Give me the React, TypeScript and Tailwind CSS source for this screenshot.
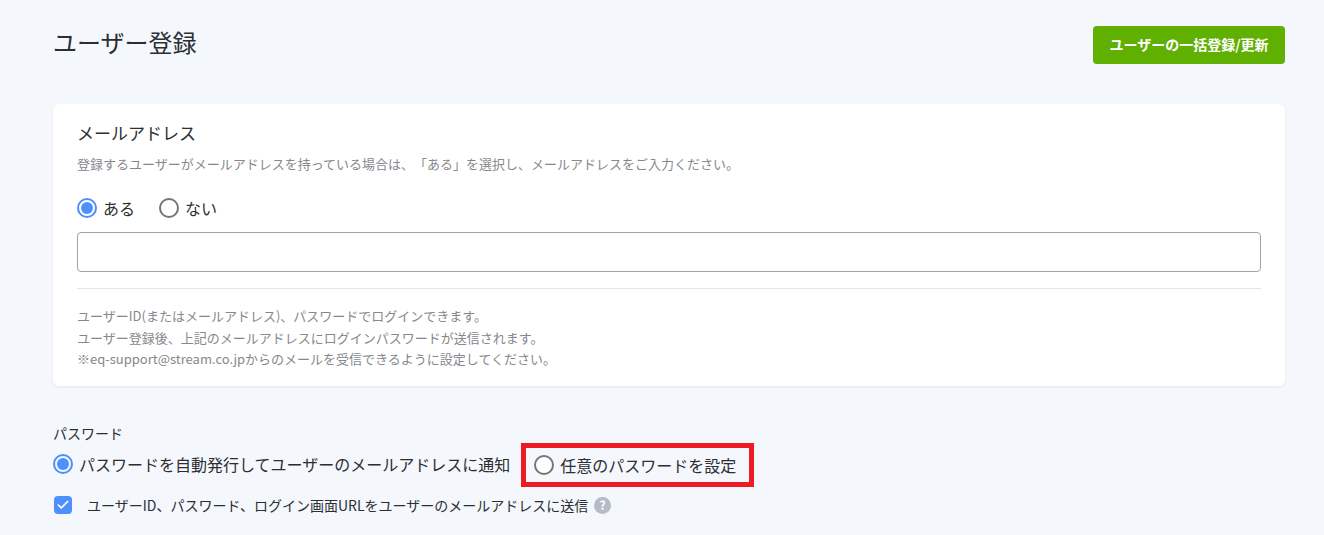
import { Check } from "lucide-react";

const Radio = ({ checked, label }: { checked?: boolean; label: string }) => (
    <label className="flex items-center gap-[6px]">
        {checked ? (
            <span className="flex h-5 w-5 items-center justify-center rounded-full border-2 border-[#4d8ffb]">
                <span className="h-3 w-3 rounded-full bg-[#4d8ffb]" />
            </span>
        ) : (
            <span className="h-5 w-5 rounded-full border-2 border-[#757575] bg-white" />
        )}
        <span>{label}</span>
    </label>
);

export default function App() {
    return (
        <div className="h-[535px] overflow-hidden bg-[#f4f7fc] pl-[53px] pr-[39px] pt-[26px] text-[#2b2f33] [text-spacing-trim:space-all] font-['Noto_Sans_CJK_JP','Noto_Sans',sans-serif]">
            <div className="flex items-start justify-between">
                <h1 className="text-2xl leading-[32px]">ユーザー登録</h1>
                <button className="h-[38px] w-[192px] rounded bg-[#5fb000] pb-[2px] text-sm font-bold text-white">
                    ユーザーの一括登録/更新
                </button>
            </div>

            <div className="mt-[40px] h-[282px] rounded-md bg-white px-6 pt-[17px] shadow-[0_1px_3px_rgba(30,50,90,0.08)]">
                <h2 className="text-[17px] leading-[24px]">メールアドレス</h2>
                <p className="mt-[10px] text-[13px] leading-[18px] text-[#85888c]">
                    登録するユーザーがメールアドレスを持っている場合は、「ある」を選択し、メールアドレスをご入力ください。
                </p>
                <div className="mt-[24px] flex gap-[24px] text-base leading-[22px]">
                    <Radio checked label="ある" />
                    <Radio label="ない" />
                </div>
                <input className="mt-[13px] block h-[40px] w-full rounded border border-[#a3a3a3] bg-white" />
                <div className="mt-4 border-t border-[#e3e5e8]" />
                <div className="mt-[16px] text-[13px] leading-[21.5px] text-[#85888c]">
                    <p>ユーザーID(またはメールアドレス)、パスワードでログインできます。</p>
                    <p>ユーザー登録後、上記のメールアドレスにログインパスワードが送信されます。</p>
                    <p>※eq-support@stream.co.jpからのメールを受信できるように設定してください。</p>
                </div>
            </div>

            <p className="mt-[37px] text-sm leading-[20px]">パスワード</p>
            <div className="flex items-center text-base leading-[22px]">
                <div className="mb-[2px]">
                    <Radio checked label="パスワードを自動発行してユーザーのメールアドレスに通知" />
                </div>
                <div className="ml-[11px] flex h-[44px] w-[233px] items-center border-[5px] border-[#ed1c24] pl-[8px]">
                    <Radio label="任意のパスワードを設定" />
                </div>
            </div>
            <div className="mt-[8px] flex items-center text-sm leading-[20px]">
                <span className="ml-px flex h-[18px] w-[18px] items-center justify-center rounded-sm bg-[#4d8ffb]">
                    <Check className="h-[14px] w-[14px] text-white" strokeWidth={3} />
                </span>
                <span className="ml-[15px]">
                    ユーザーID、パスワード、ログイン画面URLをユーザーのメールアドレスに送信
                </span>
                <span className="ml-[6px] flex h-[17px] w-[17px] items-center justify-center rounded-full bg-[#b4bcc8] text-xs font-bold text-white">
                    ?
                </span>
            </div>
        </div>
    );
}
